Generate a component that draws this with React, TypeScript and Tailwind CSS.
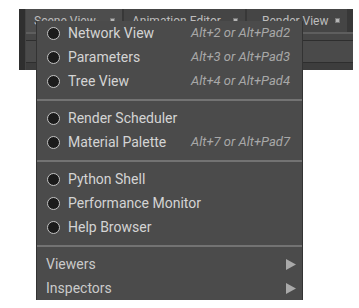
import { ReactNode } from "react";

type Item = { label: string; shortcut?: string };

const groups: Item[][] = [
    [
        { label: "Network View", shortcut: "Alt+2 or Alt+Pad2" },
        { label: "Parameters", shortcut: "Alt+3 or Alt+Pad3" },
        { label: "Tree View", shortcut: "Alt+4 or Alt+Pad4" },
    ],
    [
        { label: "Render Scheduler" },
        { label: "Material Palette", shortcut: "Alt+7 or Alt+Pad7" },
    ],
    [{ label: "Python Shell" }, { label: "Performance Monitor" }, { label: "Help Browser" }],
];

function Tab({ title, width, pad, active }: { title: string; width: string; pad: string; active?: boolean }) {
    return (
        <div
            className={`${width} ${pad} h-full flex items-center justify-between pr-[7px] shrink-0 ${
                active ? "bg-[#4d4d4d]" : "bg-[#454545]"
            }`}
        >
            <span className="text-[12px] text-[#bdbdbd] leading-none whitespace-nowrap">{title}</span>
            <span className="w-[5px] h-[5px] bg-[#b5b5b5] border border-[#777] shrink-0" />
        </div>
    );
}

function Radio() {
    return <span className="w-[13px] h-[13px] rounded-full bg-[#1b1b1b] border-[1.5px] border-[#c4c4c4] shrink-0" />;
}

function Separator() {
    return (
        <div className="h-[13px] flex items-center">
            <div className="w-full h-[2px] bg-[#737373]" />
        </div>
    );
}

function Row({ children }: { children: ReactNode }) {
    return <div className="h-[24px] flex items-center">{children}</div>;
}

export default function App() {
    return (
        <div className="relative w-[359px] h-[308px] bg-white" style={{ fontFamily: "Roboto, 'Liberation Sans', sans-serif" }}>
            {/* background pane with tabs */}
            <div className="absolute left-0 top-0 w-full pt-[9px] pl-[19px]">
                <div className="w-[334px] h-[61px] bg-[#383838] flex">
                    <div className="w-[8px] h-full bg-[#2f2f2f] border-r border-[#444]" />
                    <div className="flex-1 flex flex-col">
                        <div className="h-[23px] flex gap-[2px] pr-[6px]">
                            <Tab title="Scene View" width="w-[96px]" pad="pl-[8px]" active />
                            <Tab title="Animation Editor" width="w-[121px]" pad="pl-[8px]" />
                            <Tab title="Render View" width="w-[100px]" pad="pl-[15px]" />
                        </div>
                        <div className="h-[2px] bg-[#5e5e5e]" />
                        <div className="h-[6px] bg-[#474747]" />
                        <div className="h-[1px] bg-[#2e2e2e]" />
                        <div className="h-[21px] bg-[#4a4a4a]" />
                        <div className="h-[1px] bg-[#2e2e2e]" />
                        <div className="flex-1 bg-[#3d3d3d]" />
                    </div>
                </div>
            </div>

            {/* popup menu */}
            <div className="absolute left-[36px] top-[21px] w-[267px] bg-[#4b4b4b] border-l border-[#5f5f5f] border-r border-[#333]">
                {groups.map((g, gi) => (
                    <div key={gi}>
                        {g.map((it) => (
                            <Row key={it.label}>
                                <div className="w-full flex items-center pl-[10px] pr-[12px]">
                                    <Radio />
                                    <span className="ml-[8px] text-[14px] text-[#d4d4d4]">{it.label}</span>
                                    {it.shortcut && (
                                        <span className="ml-auto text-[13px] italic text-[#a8a8a8]">{it.shortcut}</span>
                                    )}
                                </div>
                            </Row>
                        ))}
                        <Separator />
                    </div>
                ))}
                {["Viewers", "Inspectors"].map((l) => (
                    <Row key={l}>
                        <div className="w-full flex items-center pl-[9px] pr-[6px]">
                            <span className="text-[14px] text-[#cacaca]">{l}</span>
                            <svg className="ml-auto" width="10" height="11" viewBox="0 0 10 11">
                                <path d="M0 0 L10 5.5 L0 11 Z" fill="#a9a9a9" />
                            </svg>
                        </div>
                    </Row>
                ))}
            </div>
        </div>
    );
}
